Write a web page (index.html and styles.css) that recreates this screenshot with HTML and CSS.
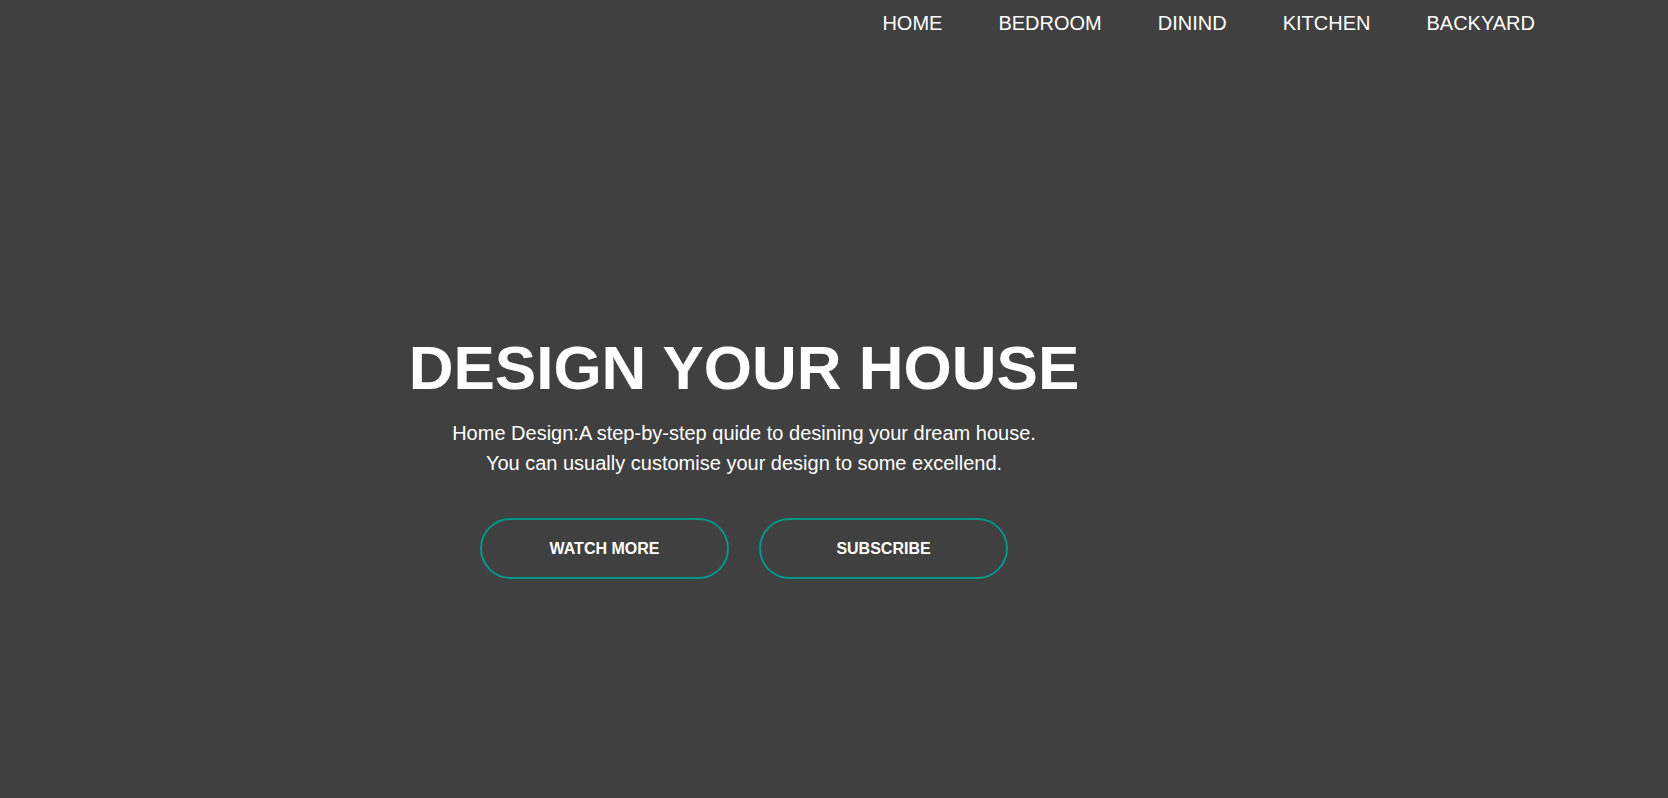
FILE: index.html
```html
<!DOCTYPE html>
<html lang="en">
<head>
<meta charset="utf-8">
<title>Design Your House</title>
<link rel="stylesheet" href="styles.css">
</head>
<body>
<header class="topbar">
  <nav class="menu">
    <a class="menu-link" href="#">HOME</a>
    <a class="menu-link" href="#">BEDROOM</a>
    <a class="menu-link" href="#">DININD</a>
    <a class="menu-link" href="#">KITCHEN</a>
    <a class="menu-link" href="#">BACKYARD</a>
  </nav>
</header>
<main class="hero">
  <h1 class="hero-title">DESIGN YOUR HOUSE</h1>
  <p class="hero-text">Home Design:A step-by-step quide to desining your dream house.<br>You can usually customise your design to some excellend.</p>
  <div class="actions">
    <a class="btn" href="#">WATCH MORE</a>
    <a class="btn" href="#">SUBSCRIBE</a>
  </div>
</main>
</body>
</html>
```
FILE: styles.css
```css
html, body {
  margin: 0;
  padding: 0;
}
body {
  background: #404040;
  color: #ffffff;
  font-family: "Liberation Sans", Arial, sans-serif;
  height: 798px;
  overflow: hidden;
}
.topbar {
  padding: 12px 133px 0 0;
}
.menu {
  display: flex;
  justify-content: flex-end;
  gap: 56px;
}
.menu-link {
  color: #ffffff;
  text-decoration: none;
  font-size: 20px;
  line-height: 23px;
}
.hero {
  display: flex;
  flex-direction: column;
  align-items: center;
  padding: 297px 180px 0 0;
  text-align: center;
}
.hero-title {
  margin: 0;
  font-size: 62px;
  font-weight: 700;
  line-height: 71px;
}
.hero-text {
  margin: 15px 0 0;
  font-size: 20px;
  line-height: 30px;
}
.actions {
  display: flex;
  gap: 30px;
  margin-top: 40px;
}
.btn {
  box-sizing: border-box;
  width: 249px;
  height: 61px;
  border: 2px solid #009688;
  border-radius: 31px;
  display: flex;
  align-items: center;
  justify-content: center;
  color: #ffffff;
  text-decoration: none;
  font-size: 16px;
  font-weight: 700;
}
```
